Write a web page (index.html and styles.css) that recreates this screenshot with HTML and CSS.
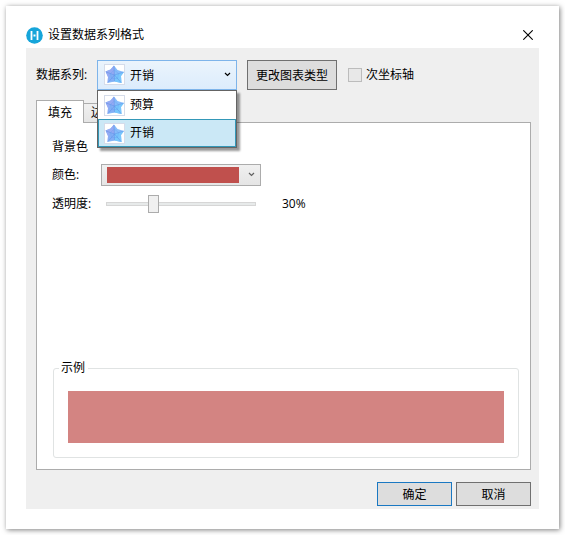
FILE: index.html
```html
<!DOCTYPE html>
<html lang="zh-CN">

<head>
  <meta charset="UTF-8">
  <meta name="viewport" content="width=device-width, initial-scale=1.0">
  <title>设置数据系列格式</title>
  <link rel="stylesheet" href="styles.css">
</head>

<body>
  <svg class="symbols" aria-hidden="true">
    <symbol id="radar" viewBox="0 0 21 21">
      <rect x="0.5" y="0.5" width="20" height="20" fill="#fff" stroke="#d5dcea" />
      <path d="M10 1.5L13.5 6L20 8L17 12L17.5 19L10.5 17.5L3.5 19L4 13L1.5 7.5L6.5 5.5Z" fill="#86bcfa" />
      <path d="M10 1.5L10.5 11L3.5 19L4 13L1.5 7.5L6.5 5.5Z" fill="#95aaf3" />
      <path d="M10.5 11L6 9L4 17.5L10.5 17.5Z" fill="#83aff6" />
      <path d="M10.5 11L20 8L17 12L17.5 19L10.5 17.5Z" fill="#78c6fc" />
      <path d="M10 2L10.5 17M2 8L10.5 11L19.5 8M4 18.5L10.5 11L17 18.5" fill="none" stroke="#5c8fe4" stroke-width="0.5" />
      <path d="M6.5 9.5L10.3 6L14.5 9.5L13.5 14.5H7.5Z" fill="none" stroke="#669ff0" stroke-width="0.4" />
    </symbol>
    <symbol id="arrow" viewBox="0 0 7 7">
      <path d="M1 2L3.5 4.5L6 2" fill="none" stroke="currentColor" stroke-width="1.2" />
    </symbol>
  </svg>

  <div class="window">
    <header class="title-bar">
      <svg class="logo" viewBox="0 0 17 17" aria-hidden="true">
        <circle cx="8.5" cy="8.5" r="8.3" fill="#16a5da" />
        <path d="M5.5 4V13M11.5 4V13" stroke="#fff" stroke-width="1.8" />
        <path d="M7.5 8.5H9.5" stroke="#fff" stroke-width="2" />
      </svg>
      <h1>设置数据系列格式</h1>
      <button class="close" aria-label="关闭">
        <svg viewBox="0 0 10 10">
          <path d="M0.3 0.3L9.7 9.7M9.7 0.3L0.3 9.7" stroke="#000" stroke-width="1.1" />
        </svg>
      </button>
    </header>

    <main class="content">
      <div class="toolbar">
        <label class="series-label" for="series">数据系列:</label>
        <div class="combo">
          <select id="series" class="series-select">
            <option>预算</option>
            <option selected>开销</option>
          </select>
          <svg class="combo-icon"><use href="#radar" /></svg>
          <svg class="combo-arrow"><use href="#arrow" /></svg>
          <ul class="menu" role="listbox" aria-label="数据系列">
            <li role="option" aria-selected="false"><svg class="item-icon"><use href="#radar" /></svg>预算</li>
            <li class="selected" role="option" aria-selected="true"><svg class="item-icon"><use href="#radar" /></svg>开销</li>
          </ul>
        </div>
        <button class="btn btn-type">更改图表类型</button>
        <label class="check"><input type="checkbox" disabled>次坐标轴</label>
      </div>

      <div class="tabs" role="tablist">
        <button class="tab active" role="tab" aria-selected="true">填充</button>
        <button class="tab" role="tab" aria-selected="false">边框</button>
      </div>

      <section class="panel" role="tabpanel">
        <h2>背景色</h2>
        <div class="row">
          <label for="color">颜色:</label>
          <div class="combo">
            <select id="color" class="color-select">
              <option value="#c0504d" aria-label="红色"></option>
            </select>
            <svg class="combo-arrow"><use href="#arrow" /></svg>
          </div>
        </div>
        <div class="row">
          <label for="opacity">透明度:</label>
          <input type="range" id="opacity" class="slider" min="0" max="100" value="30">
          <output for="opacity">30%</output>
        </div>

        <fieldset class="sample">
          <legend>示例</legend>
          <div class="sample-fill"></div>
        </fieldset>
      </section>

      <footer class="actions">
        <button class="btn btn-default">确定</button>
        <button class="btn">取消</button>
      </footer>
    </main>
  </div>
</body>

</html>
```
FILE: styles.css
```css
* {
  box-sizing: border-box;
}

body {
  margin: 0;
  padding: 6px;
  min-height: 100vh;
  display: flex;
  background: #fff;
  color: #000;
  font-family: "Open Sans", "Noto Sans CJK SC", sans-serif;
  font-size: 12px;
  line-height: 18px;
}

h1,
h2 {
  margin: 0;
  font-size: 12px;
  font-weight: normal;
}

button,
select,
input {
  margin: 0;
  font: inherit;
  color: inherit;
  border-radius: 0;
}

.symbols {
  position: absolute;
  width: 0;
  height: 0;
}

.window {
  flex: 1;
  display: flex;
  flex-direction: column;
  padding: 20px;
  background: #fff;
  box-shadow: 1px 1px 5px rgba(0, 0, 0, 0.5);
}

.title-bar {
  display: flex;
  align-items: center;
  gap: 5px;
  height: 22px;
  padding-bottom: 4px;
}

.logo {
  width: 17px;
  height: 17px;
}

.close {
  display: flex;
  margin-left: auto;
  padding: 4px 6px;
  border: none;
  background: none;
}

.close svg {
  width: 10px;
  height: 10px;
}

.content {
  flex: 1;
  display: flex;
  flex-direction: column;
  padding: 12px 8px 3px 10px;
  background: #efefef;
}

.toolbar {
  display: flex;
  align-items: center;
  height: 30px;
}

.series-label {
  width: 61px;
}

.combo {
  position: relative;
  display: flex;
}

.combo select {
  appearance: none;
  outline: none;
}

.series-select {
  width: 140px;
  height: 30px;
  padding: 2px 24px 0 32px;
  border: 1px solid #7eb4ea;
  background: linear-gradient(#ebf4fc, #dcecfc);
}

.combo-icon {
  position: absolute;
  left: 7px;
  top: 4px;
  width: 21px;
  height: 21px;
  pointer-events: none;
}

.combo-arrow {
  position: absolute;
  right: 6px;
  top: 50%;
  width: 7px;
  height: 7px;
  margin-top: -4px;
  pointer-events: none;
}

.menu {
  position: absolute;
  left: 0;
  top: 100%;
  z-index: 1;
  width: 100%;
  margin: 0;
  padding: 0;
  list-style: none;
  border: 1px solid #646464;
  background: #fff;
  box-shadow: 3px 3px 2px rgba(0, 0, 0, 0.4);
}

.menu li {
  display: flex;
  align-items: center;
  gap: 5px;
  height: 28px;
  padding: 0 5px;
  border: 1px solid transparent;
}

.menu li.selected {
  border-color: #3498b8;
  background: #cbe8f6;
}

.item-icon {
  width: 21px;
  height: 21px;
}

.btn {
  width: 75px;
  height: 24px;
  padding: 2px 0 0;
  border: 1px solid #707070;
  background: #ddd;
}

.btn-type {
  width: 90px;
  height: 30px;
  margin-left: 10px;
}

.btn-default {
  border-color: #1a78c2;
}

.check {
  display: flex;
  align-items: center;
  gap: 4px;
  margin-left: 11px;
}

.check input {
  appearance: none;
  width: 14px;
  height: 14px;
  border: 1px solid #bcbcbc;
  background: #e8e8e8;
}

.tabs {
  display: flex;
  align-items: flex-end;
  height: 23px;
  margin-top: 10px;
}

.tab {
  height: 20px;
  padding: 0 7px;
  border: 1px solid #acacac;
  border-left: none;
  background: linear-gradient(#f0f0f0, #e5e5e5);
}

/* the active tab covers the top edge of the panel */
.tab.active {
  position: relative;
  z-index: 1;
  width: 48px;
  height: 23px;
  padding: 2px 0 0;
  border: 1px solid #acacac;
  border-bottom: none;
  background: #fff;
}

.panel {
  flex: 1;
  display: flex;
  flex-direction: column;
  margin-top: -1px;
  padding: 15px 11px 11px 15px;
  border: 1px solid #acacac;
  background: #fff;
}

.row {
  display: flex;
  align-items: center;
  height: 22px;
  margin-top: 8px;
}

.row + .row {
  margin-top: 7px;
}

.row label {
  width: 49px;
}

.color-select {
  width: 160px;
  height: 22px;
  border: 1px solid #acacac;
  background: linear-gradient(#c0504d, #c0504d) 5px 2px / 132px 16px no-repeat,
    linear-gradient(#f0f0f0, #e5e5e5);
}

.color-select + .combo-arrow {
  color: #606060;
}

.slider {
  appearance: none;
  width: 150px;
  height: 18px;
  margin-left: 5px;
  background: none;
}

.slider::-webkit-slider-runnable-track {
  height: 4px;
  border: 1px solid #d6d6d6;
  background: #e7eaea;
}

.slider::-webkit-slider-thumb {
  appearance: none;
  width: 11px;
  height: 18px;
  margin-top: -8px;
  border: 1px solid #acacac;
  background: #f0f0f0;
}

.row output {
  margin-left: 26px;
}

.sample {
  margin: auto 0 0 1px;
  padding: 14px;
  border: 1px solid #e0e3e3;
  border-radius: 3px;
}

.sample legend {
  margin-left: -9px;
  padding: 0 3px 0 2px;
}

.sample-fill {
  height: 52px;
  background: #d38482;
}

.actions {
  display: flex;
  justify-content: flex-end;
  gap: 4px;
  padding-top: 12px;
}
```
